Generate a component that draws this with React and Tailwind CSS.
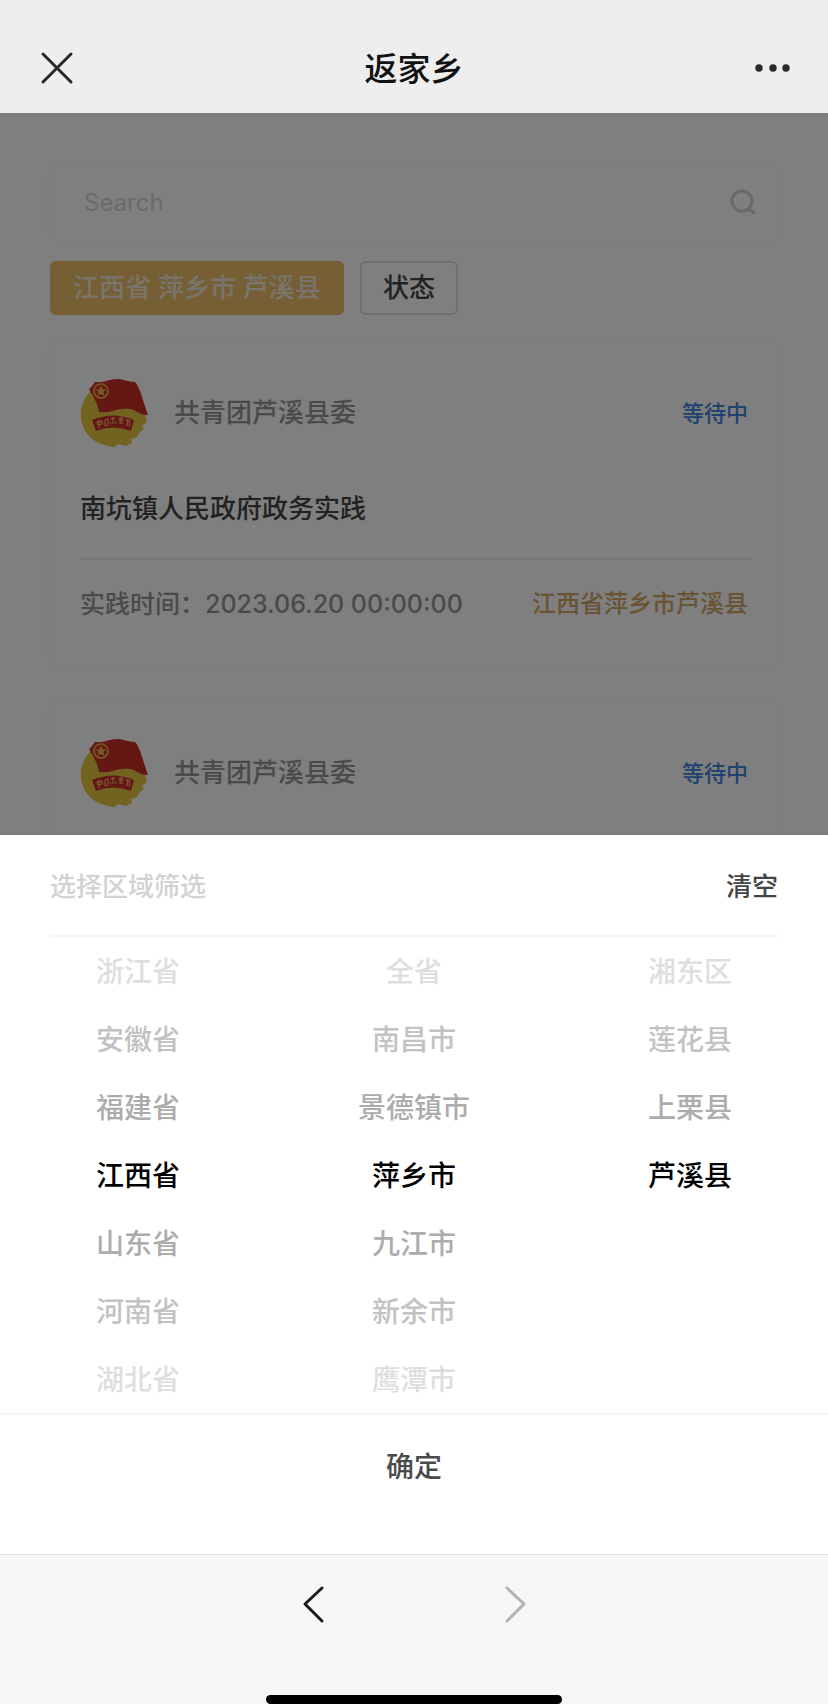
import React from 'react'

const activities = [
  { id: 1, org: '共青团芦溪县委', status: '等待中', title: '南坑镇人民政府政务实践', time: '2023.06.20 00:00:00', area: '江西省萍乡市芦溪县' },
  { id: 2, org: '共青团芦溪县委', status: '等待中' },
];

// Index 3 of every column is the selected row
const columns = [
  { label: '省份', items: ['浙江省', '安徽省', '福建省', '江西省', '山东省', '河南省', '湖北省'] },
  { label: '城市', items: ['全省', '南昌市', '景德镇市', '萍乡市', '九江市', '新余市', '鹰潭市'] },
  { label: '区县', items: ['湘东区', '莲花县', '上栗县', '芦溪县'] },
];

const SELECTED = 3;

const rowColors = [
  'text-[#dedede]',
  'text-[#c2c2c2]',
  'text-[#acacac]',
  'text-black',
  'text-[#acacac]',
  'text-[#c2c2c2]',
  'text-[#dedede]',
];

function LeagueBadge() {
  return (
    <svg className="w-[70px] h-[70px] shrink-0" viewBox="0 0 70 70" aria-hidden="true">
      <path d="M12 12C4 19 0 29 1 40C2 52 10 62 21 66C26 68 31 69 35 69L38 66L46 68L52 65L51 61L57 59L60 54L64 51L62 48L67 44L65 36L60 31Z" fill="#e6c640" />
      <path d="M9 11C12 9 13 6 15 4C24 5 29 1 38 1C43 1 48 4 55 4C60 9 62 20 68 37C58 37 57 32 49 31C38 29 30 36 19 34C18 26 13 18 9 11Z" fill="#cb2f28" />
      <circle cx="21" cy="13" r="7" fill="none" stroke="#f0b850" strokeWidth="1.6" />
      <path d="M21 7.500L22.500 11.300L26.500 11.500L23.400 14L24.500 18L21 15.800L17.500 18L18.600 14L15.500 11.500L19.500 11.300Z" fill="#f0b850" />
      <path d="M12 42Q33 33 54 42L51 53Q33 46 16 53Z" fill="#cb2f28" />
      <path d="M17 44l5-1v3l-4 1zM19 42v8M25 42l3-1v6l-3 1zM31 41l4-1M33 39v7M31 44l-1 2M35 44l1 2M39 40h4M38 42h6M41 39v7M39 45h4M46 42l5 1M47 44l3 1M48 41l-1 7M50 45l-1 4" fill="none" stroke="#f0c86a" strokeWidth="1" />
    </svg>
  );
}

function ActivityCard({ item }) {
  return (
    <article className="mx-[50px] pl-[30px] pr-[26px] pt-[35px] h-[324px] mb-9 rounded-lg shadow-[0_0_10px_rgba(0,0,0,0.04)]">
      <div className="flex items-center">
        <LeagueBadge />
        <span className="ml-6 text-[26px] leading-9 font-medium text-[#959595]">{item.org}</span>
        <span className="ml-auto pr-1 text-[22px] leading-9 font-medium text-[#4184dc]">{item.status}</span>
      </div>
      {item.title && (
        <>
          <h2 className="mt-10 text-[26px] leading-[42px] font-medium text-[#444444]">{item.title}</h2>
          <hr className="mt-7 border-t-2 border-[#ececec]" />
          <div className="mt-6 flex items-center justify-between leading-10 font-medium">
            <span className="text-[25px] text-[#959595]">实践时间：{item.time}</span>
            <span className="pr-1 text-2xl text-[#d2a664]">{item.area}</span>
          </div>
        </>
      )}
    </article>
  );
}

function PickerColumn({ column }) {
  return (
    <ul role="listbox" aria-label={column.label} className="flex-1 text-center">
      {column.items.map((name, i) => (
        <li
          key={name}
          role="option"
          aria-selected={i === SELECTED}
          className={`h-[68px] text-[28px] leading-[68px] font-medium ${rowColors[i]}`}
        >
          {name}
        </li>
      ))}
    </ul>
  );
}

export default function App() {
  return (
    <div className="min-h-screen w-full flex flex-col bg-white font-['Inter','Noto_Sans_CJK_SC',sans-serif]">
      <header className="h-[113px] px-9 pt-6 flex items-center justify-between bg-[#eeeeee]">
        <button type="button" aria-label="关闭" className="size-[42px]">
          <svg viewBox="0 0 42 42" fill="none" stroke="#2a2a2a" strokeWidth="3" strokeLinecap="round">
            <path d="M7 6L35 34M35 6L7 34" />
          </svg>
        </button>
        <h1 className="text-[33px] leading-10 font-medium text-[#111111]">返家乡</h1>
        <button type="button" aria-label="更多" className="size-[42px]">
          <svg viewBox="0 0 42 42" fill="#2a2a2a">
            <circle cx="9" cy="20" r="3.700" />
            <circle cx="23" cy="20" r="3.700" />
            <circle cx="36" cy="20" r="3.700" />
          </svg>
        </button>
      </header>

      <main className="relative h-[722px] overflow-hidden bg-white">
        <div className="mt-[53px] mx-[50px] h-[74px] pl-[34px] pr-5 flex items-center rounded-lg shadow-[0_0_10px_rgba(0,0,0,0.04)]">
          <input
            type="text"
            aria-label="Search"
            placeholder="Search"
            className="flex-1 min-w-0 text-2xl leading-9 outline-none placeholder:text-[#d6d6d6]"
          />
          <svg className="size-7" viewBox="0 0 28 28" fill="none" stroke="#d2d2d2" strokeWidth="3" strokeLinecap="round" aria-hidden="true">
            <circle cx="12" cy="12" r="10" />
            <path d="M19 20L24 24" />
          </svg>
        </div>

        <div className="mt-[21px] mx-[50px] flex gap-4">
          <button type="button" className="h-[54px] px-[23px] rounded-md bg-[#ecbe6a] text-[26px] leading-9 font-medium text-[#f4ead8]">
            江西省 萍乡市 芦溪县
          </button>
          <button type="button" className="h-[54px] px-[21px] rounded-md border-2 border-[#dedede] text-[26px] leading-9 font-medium text-[#444444]">
            状态
          </button>
        </div>

        <div className="pt-[28px]">
          {activities.map((item) => (
            <ActivityCard key={item.id} item={item} />
          ))}
        </div>

        {/* Backdrop behind the area picker */}
        <div className="absolute inset-0 bg-black/50" />
      </main>

      <section className="bg-white" aria-label="选择区域筛选">
        <div className="mx-[50px] h-[102px] pt-1 flex items-center justify-between border-b-2 border-[#f6f6f6] text-[26px] leading-10 font-medium">
          <span className="text-[#d2d2d2]">选择区域筛选</span>
          <button type="button" className="text-[#444444]">清空</button>
        </div>
        <div className="h-[476px] pt-px flex">
          {columns.map((column) => (
            <PickerColumn key={column.label} column={column} />
          ))}
        </div>
        <button type="button" className="block w-full h-[141px] pb-9 border-t-2 border-[#f4f4f4] text-[28px] leading-10 font-medium text-[#4a4a4a]">
          确定
        </button>
      </section>

      <nav className="flex-1 flex flex-col items-center justify-between bg-[#f6f6f6] border-t border-[#e2e2e2]">
        <div className="pt-7 flex gap-[160px]">
          <button type="button" aria-label="后退" className="size-[42px]">
            <svg viewBox="0 0 42 42" fill="none" stroke="#1a1a1a" strokeWidth="3" strokeLinecap="round" strokeLinejoin="round">
              <path d="M30 5L13 21L30 38" />
            </svg>
          </button>
          <button type="button" aria-label="前进" className="size-[42px]">
            <svg viewBox="0 0 42 42" fill="none" stroke="#b2b2b2" strokeWidth="3" strokeLinecap="round" strokeLinejoin="round">
              <path d="M13 5L30 21L13 38" />
            </svg>
          </button>
        </div>
        <div className="w-[296px] h-[9px] rounded-full bg-black" />
      </nav>
    </div>
  );
}
